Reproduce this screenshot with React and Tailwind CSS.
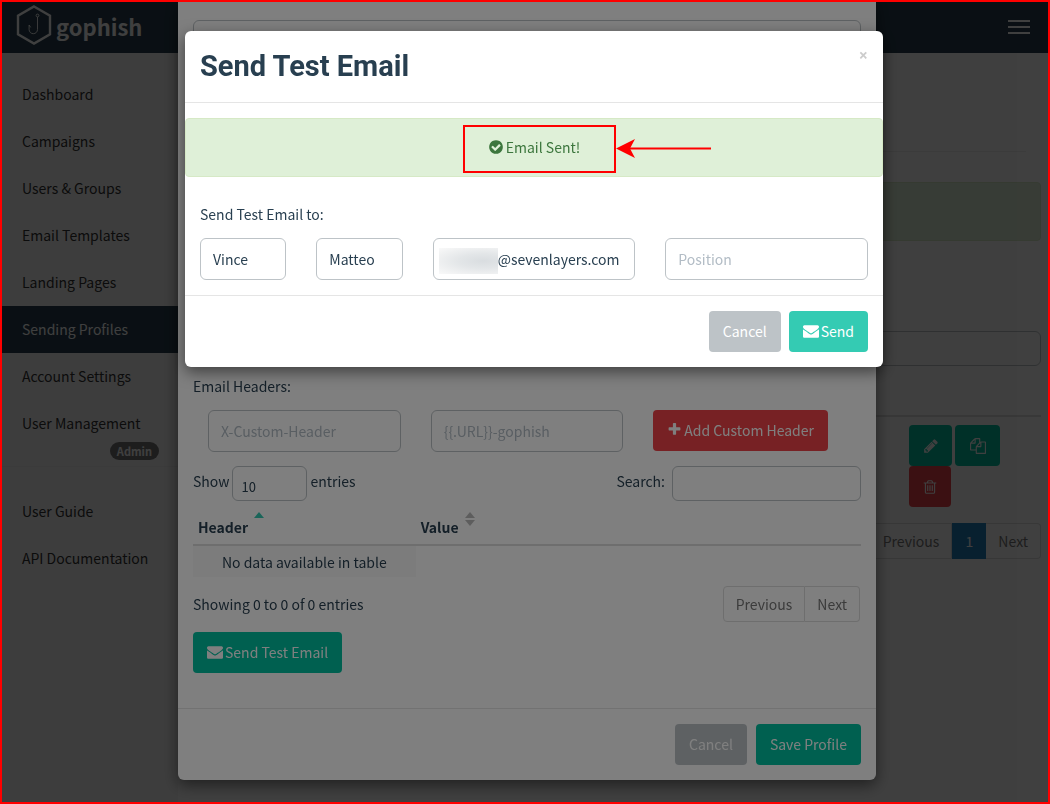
import { useState } from 'react';

const icons = {
  envelope: 'M1792 710v794q0 66-47 113t-113 47h-1472q-66 0-113-47t-47-113v-794q44 49 101 87 362 246 497 345 57 42 92.5 65.5t94.5 48 110 24.5h2q51 0 110-24.5t94.5-48 92.5-65.5q170-123 498-345 57-39 100-87zm0-294q0 79-49 151t-122 123q-376 261-468 325-10 7-42.5 31t-54 38.5-52 32.5-57.5 27-50 9h-2q-23 0-50-9t-57.5-27-52-32.5-54-38.5-42.5-31q-91-64-262-182.5t-205-142.5q-62-42-117-115.5t-55-136.5q0-78 41.5-130t118.5-52h1472q65 0 112.5 47t47.5 113z',
  check: 'M1412 734q0-28-18-46l-91-90q-19-19-45-19t-45 19l-408 407-226-226q-19-19-45-19t-45 19l-91 90q-18 18-18 46 0 27 18 45l362 362q19 19 45 19 27 0 46-19l543-543q18-18 18-45zm252 162q0 209-103 385.5t-279.5 279.5-385.5 103-385.5-103-279.5-279.5-103-385.5 103-385.5 279.5-279.5 385.5-103 385.5 103 279.5 279.5 103 385.5z',
  plus: 'M1600 736v192q0 40-28 68t-68 28h-416v416q0 40-28 68t-68 28h-192q-40 0-68-28t-28-68v-416h-416q-40 0-68-28t-28-68v-192q0-40 28-68t68-28h416v-416q0-40 28-68t68-28h192q40 0 68 28t28 68v416h416q40 0 68 28t28 68z',
  pencil: 'M491 1536l91-91-235-235-91 91v107h128v128h107zm523-928q0-22-22-22-10 0-17 7l-542 542q-7 7-7 17 0 22 22 22 10 0 17-7l542-542q7-7 7-17zm-54-192l416 416-832 832h-416v-416zm683 96q0 53-37 90l-166 166-416-416 166-165q36-38 90-38 53 0 91 38l235 234q37 39 37 91z',
  trash: 'M704 736v576q0 14-9 23t-23 9h-64q-14 0-23-9t-9-23v-576q0-14 9-23t23-9h64q14 0 23 9t9 23zm256 0v576q0 14-9 23t-23 9h-64q-14 0-23-9t-9-23v-576q0-14 9-23t23-9h64q14 0 23 9t9 23zm256 0v576q0 14-9 23t-23 9h-64q-14 0-23-9t-9-23v-576q0-14 9-23t23-9h64q14 0 23 9t9 23zm128 724v-948h-896v948q0 22 7 40.5t14.5 27 10.5 8.5h832q3 0 10.5-8.5t14.5-27 7-40.5zm-672-1076h448l-48-117q-7-9-17-11h-317q-10 2-17 11zm928 32v64q0 14-9 23t-23 9h-96v948q0 83-47 143.5t-113 60.5h-832q-66 0-113-58.5t-47-141.5v-952h-96q-14 0-23-9t-9-23v-64q0-14 9-23t23-9h309l70-167q15-37 54-63t79-26h320q40 0 79 26t54 63l70 167h309q14 0 23 9t9 23z',
  copy: 'M1696 384q40 0 68 28t28 68v1216q0 40-28 68t-68 28h-960q-40 0-68-28t-28-68v-288h-544q-40 0-68-28t-28-68v-672q0-40 20-88t48-76l408-408q28-28 76-48t88-20h416q40 0 68 28t28 68v328q68-40 128-40h416zm-544 213l-299 299h299v-299zm-640-384l-299 299h299v-299zm196 647l316-316v-416h-384v416q0 40-28 68t-68 28h-416v640h512v-256q0-40 20-88t48-76zm956 804v-1152h-384v416q0 40-28 68t-68 28h-416v640h896z',
};

function Icon({ name, className = 'size-4' }) {
  return (
    <svg viewBox="0 0 1792 1792" fill="currentColor" className={`${className} shrink-0`} aria-hidden="true">
      <path d={icons[name]} />
    </svg>
  );
}

const inputClass = 'block w-full h-[42px] rounded-md border border-[#bdc3c7] bg-white px-3 placeholder:text-[#b2bcc5] outline-none';
const buttonClass = 'flex h-[41px] items-center justify-center gap-[2px] rounded px-[14px] pb-[2px] text-white';

const navItems = ['Dashboard', 'Campaigns', 'Users & Groups', 'Email Templates', 'Landing Pages', 'Sending Profiles', 'Account Settings'];

function Logo() {
  return (
    <a href="#" className="flex items-center gap-1 pb-[6px] pl-[14px] text-white">
      <svg viewBox="0 0 36 40" className="h-10 w-9" fill="none" stroke="currentColor" aria-hidden="true">
        <path d="M18 1.5 34 10.7v18.6L18 38.5 2 29.3V10.7z" strokeWidth="2.4" />
        <circle cx="21.5" cy="10.5" r="1.4" strokeWidth="0.9" />
        <path d="M21.5 12v12.5a4.2 4.2 0 0 1-8.4 0v-4.5l1.6 2.4" strokeWidth="0.9" />
      </svg>
      <span className="pt-[2px] text-[22px] font-bold leading-8">gophish</span>
    </a>
  );
}

function Sidebar() {
  return (
    <nav className="w-44 shrink-0 bg-[#f7f7f7] pt-[18px] text-[#333]">
      <ul>
        {navItems.map((item) => (
          <li key={item}>
            <a
              href="#"
              className={`flex h-[47px] items-center px-5 pb-[2px] ${item === 'Sending Profiles' ? 'bg-[#283f50] text-white' : ''}`}
            >
              {item}
            </a>
          </li>
        ))}
        <li className="h-[67px] border-b border-[#eee]">
          <a href="#" className="flex flex-col pl-5 pr-[19px] pt-[13px] leading-5">
            User Management
            <span className="mt-[9px] self-end rounded-full bg-[#777] px-[7px] text-[11px] font-bold leading-[18px] text-white">
              Admin
            </span>
          </a>
        </li>
      </ul>
      <ul className="pt-5">
        <li><a href="#" className="flex h-[47px] items-center px-5">User Guide</a></li>
        <li><a href="#" className="flex h-[47px] items-center px-5">API Documentation</a></li>
      </ul>
    </nav>
  );
}

function ProfilesPage() {
  return (
    <main className="min-w-0 flex-1 pl-[15px] pr-[7px]">
      <hr className="mr-[15px] mt-[98px] border-[#eee]" />
      <div className="mt-[30px] h-[59px] rounded border border-[#d6e9c6] bg-[#dff0d8]" />
      <div className="mt-[90px] flex justify-end">
        <input type="search" aria-label="Search profiles" className="h-[35px] w-48 rounded-md border border-[#bdc3c7]" />
      </div>
      <div className="mt-[49px] flex justify-end border-t-2 border-[#ddd] pt-2">
        <div className="flex w-[132px] flex-wrap gap-x-[3px]">
          <button aria-label="Edit" className="flex h-[41px] w-[43px] items-center justify-center rounded bg-[#00c1a0] text-white">
            <Icon name="pencil" />
          </button>
          <button aria-label="Copy" className="flex h-[41px] w-[45px] items-center justify-center rounded bg-[#00c1a0] text-white">
            <Icon name="copy" />
          </button>
          <button aria-label="Delete" className="flex h-[41px] w-[42px] items-center justify-center rounded bg-[#ef4348] text-white">
            <Icon name="trash" />
          </button>
        </div>
      </div>
      <div className="mt-4 flex justify-end text-[#777]">
        <button className="h-9 rounded-l border border-[#ddd] px-3">Previous</button>
        <button className="h-9 w-[34px] bg-[#2382be] text-white">1</button>
        <button className="h-9 rounded-r border border-l-0 border-[#ddd] px-3">Next</button>
      </div>
    </main>
  );
}

function SortArrows({ asc }) {
  return (
    <svg viewBox="0 0 10 14" className="mb-[17px] ml-[6px] h-[14px] w-[10px]" aria-hidden="true">
      <path d="M5 0 10 6H0z" fill={asc ? '#34cbb3' : '#bbb'} />
      {!asc && <path d="M0 8h10l-5 6z" fill="#bbb" />}
    </svg>
  );
}

function ProfileModal() {
  return (
    <div className="fixed inset-0 z-10 overflow-hidden bg-black/50 pl-1">
      <div role="dialog" aria-label="Edit Sending Profile" className="mx-auto max-w-[698px] rounded-b-md bg-white shadow-[0_5px_15px_rgba(0,0,0,0.5)]">
        <div className="px-[15px] pb-[35px] pt-5">
          <input aria-label="Host" className={inputClass} />
          <div className="pt-[314px] leading-5">Email Headers:</div>
          <div className="mt-[14px] grid grid-cols-3">
            <div className="px-[15px]">
              <input aria-label="Header name" placeholder="X-Custom-Header" className={inputClass} />
            </div>
            <div className="px-[15px]">
              <input aria-label="Header value" placeholder="{{.URL}}-gophish" className={inputClass} />
            </div>
            <div className="pl-[15px]">
              <button className={`${buttonClass} bg-[#ef4348]`}>
                <Icon name="plus" className="size-[15px]" />
                Add Custom Header
              </button>
            </div>
          </div>
          <div className="mt-[14px] flex justify-between">
            <label className="flex items-start gap-[2px] leading-[30px]">
              Show
              <select className="mr-[2px] h-[35px] w-[75px] appearance-none rounded-md border border-[#bdc3c7] px-[9px] pt-[6px] text-[13px] leading-6">
                <option>10</option>
              </select>
              entries
            </label>
            <label className="flex items-start gap-[7px] leading-[30px]">
              Search:
              <input type="search" className="h-[35px] w-[189px] rounded-md border border-[#bdc3c7]" />
            </label>
          </div>
          <table className="mt-2 w-full table-fixed">
            <thead>
              <tr className="h-9 border-b-2 border-[#ddd] text-left">
                <th className="p-0 pl-[5px]">
                  <span className="flex items-end leading-8">Header<SortArrows asc /></span>
                </th>
                <th className="p-0 pl-[5px]">
                  <span className="flex items-end leading-8">Value<SortArrows /></span>
                </th>
                <th />
              </tr>
            </thead>
            <tbody>
              <tr className="h-8">
                <td className="whitespace-nowrap bg-[#f9f9f9] p-0 text-center">No data available in table</td>
              </tr>
            </tbody>
          </table>
          <div className="mt-[9px] flex items-center justify-between">
            <span>Showing 0 to 0 of 0 entries</span>
            <div className="flex pr-px text-[#777]">
              <button className="h-9 rounded-l border border-[#ddd] px-3">Previous</button>
              <button className="h-9 rounded-r border border-l-0 border-[#ddd] px-3">Next</button>
            </div>
          </div>
          <button className={`${buttonClass} mt-[10px] bg-[#00c1a0]`}>
            <Icon name="envelope" />
            Send Test Email
          </button>
        </div>
        <div className="flex justify-end gap-[9px] border-t border-[#e5e5e5] p-[15px]">
          <button className={`${buttonClass} bg-[#bdc3c7]`}>Cancel</button>
          <button className={`${buttonClass} bg-[#00c1a0]`}>Save Profile</button>
        </div>
      </div>
    </div>
  );
}

function Annotation() {
  return (
    <div className="pointer-events-none absolute left-1/2 top-[6px] ml-[-71px]">
      <div className="h-12 w-[153px] border-2 border-[#f00]" />
      <svg viewBox="0 0 96 20" className="absolute left-full top-[13px] h-5 w-24" aria-hidden="true">
        <path d="M12 10.5H95" stroke="#f00" strokeWidth="2" />
        <path d="M0 10.5 19 1 14 10.5 19 20z" fill="#f00" />
      </svg>
    </div>
  );
}

function TestEmailModal() {
  const [target, setTarget] = useState({ first: 'Vince', last: 'Matteo', email: '@sevenlayers.com', position: '' });
  const update = (key) => (e) => setTarget({ ...target, [key]: e.target.value });

  return (
    <div className="fixed inset-0 z-20 overflow-hidden bg-black/50 pl-[18px] pt-[31px]">
      <div role="dialog" aria-labelledby="test-title" className="mx-auto max-w-[698px] rounded-md bg-white shadow-[0_5px_15px_rgba(0,0,0,0.5)]">
        <div className="flex items-start justify-between border-b border-[#e5e5e5] px-[15px] pb-4 pt-[15px]">
          <h4 id="test-title" className="font-[Roboto] text-[29px] font-bold leading-10">Send Test Email</h4>
          <button aria-label="Close" className="font-['Open_Sans',sans-serif] text-base font-bold leading-[18px] text-[#ccc]">×</button>
        </div>
        <div className="relative mt-[15px] flex h-[59px] items-center justify-center gap-[2px] rounded border border-[#d6e9c6] bg-[#dff0d8] pb-[2px] text-[#3c763d]">
          <Icon name="check" />
          Email Sent!
          <Annotation />
        </div>
        <div className="mt-[27px] px-[15px] leading-5">Send Test Email to:</div>
        <div className="mt-[14px] grid grid-cols-[1fr_1fr_2fr_2fr] pb-[15px]">
          <div className="px-[15px]">
            <input aria-label="First name" value={target.first} onChange={update('first')} className={inputClass} />
          </div>
          <div className="px-[15px]">
            <input aria-label="Last name" value={target.last} onChange={update('last')} className={inputClass} />
          </div>
          <div className="px-[15px]">
            <div className="relative">
              <input
                aria-label="Email"
                value={target.email}
                onChange={update('email')}
                className="block h-[42px] w-full rounded-md border border-[#bdc3c7] bg-white pl-16 outline-none"
              />
              <span className="absolute left-[6px] top-[10px] h-[26px] w-[59px] bg-[radial-gradient(ellipse_at_75%_50%,#d9dde0,#e3e6e8_40%,#f9f9f9_100%)]" />
            </div>
          </div>
          <div className="px-[15px]">
            <input aria-label="Position" placeholder="Position" value={target.position} onChange={update('position')} className={inputClass} />
          </div>
        </div>
        <div className="flex justify-end gap-2 border-t border-[#e5e5e5] p-[15px]">
          <button className={`${buttonClass} bg-[#bdc3c7]`}>Cancel</button>
          <button className={`${buttonClass} bg-[#34cbb3]`}>
            <Icon name="envelope" />
            Send
          </button>
        </div>
      </div>
    </div>
  );
}

export default function App() {
  return (
    <div className="flex min-h-screen flex-col bg-white p-[2px] font-['Noto_Sans_CJK_SC',sans-serif] text-sm text-[#283f50]">
      <header className="flex h-[51px] items-center justify-between bg-[#283f50] pr-[18px]">
        <Logo />
        <button aria-label="Menu" className="flex flex-col gap-1 pb-[2px]">
          <span className="h-[2px] w-[22px] bg-white" />
          <span className="h-[2px] w-[22px] bg-white" />
          <span className="h-[2px] w-[22px] bg-white" />
        </button>
      </header>
      <div className="flex flex-1">
        <Sidebar />
        <ProfilesPage />
      </div>
      <ProfileModal />
      <TestEmailModal />
      <div className="pointer-events-none fixed inset-0 z-30 border-2 border-[#f00]" />
    </div>
  );
}
